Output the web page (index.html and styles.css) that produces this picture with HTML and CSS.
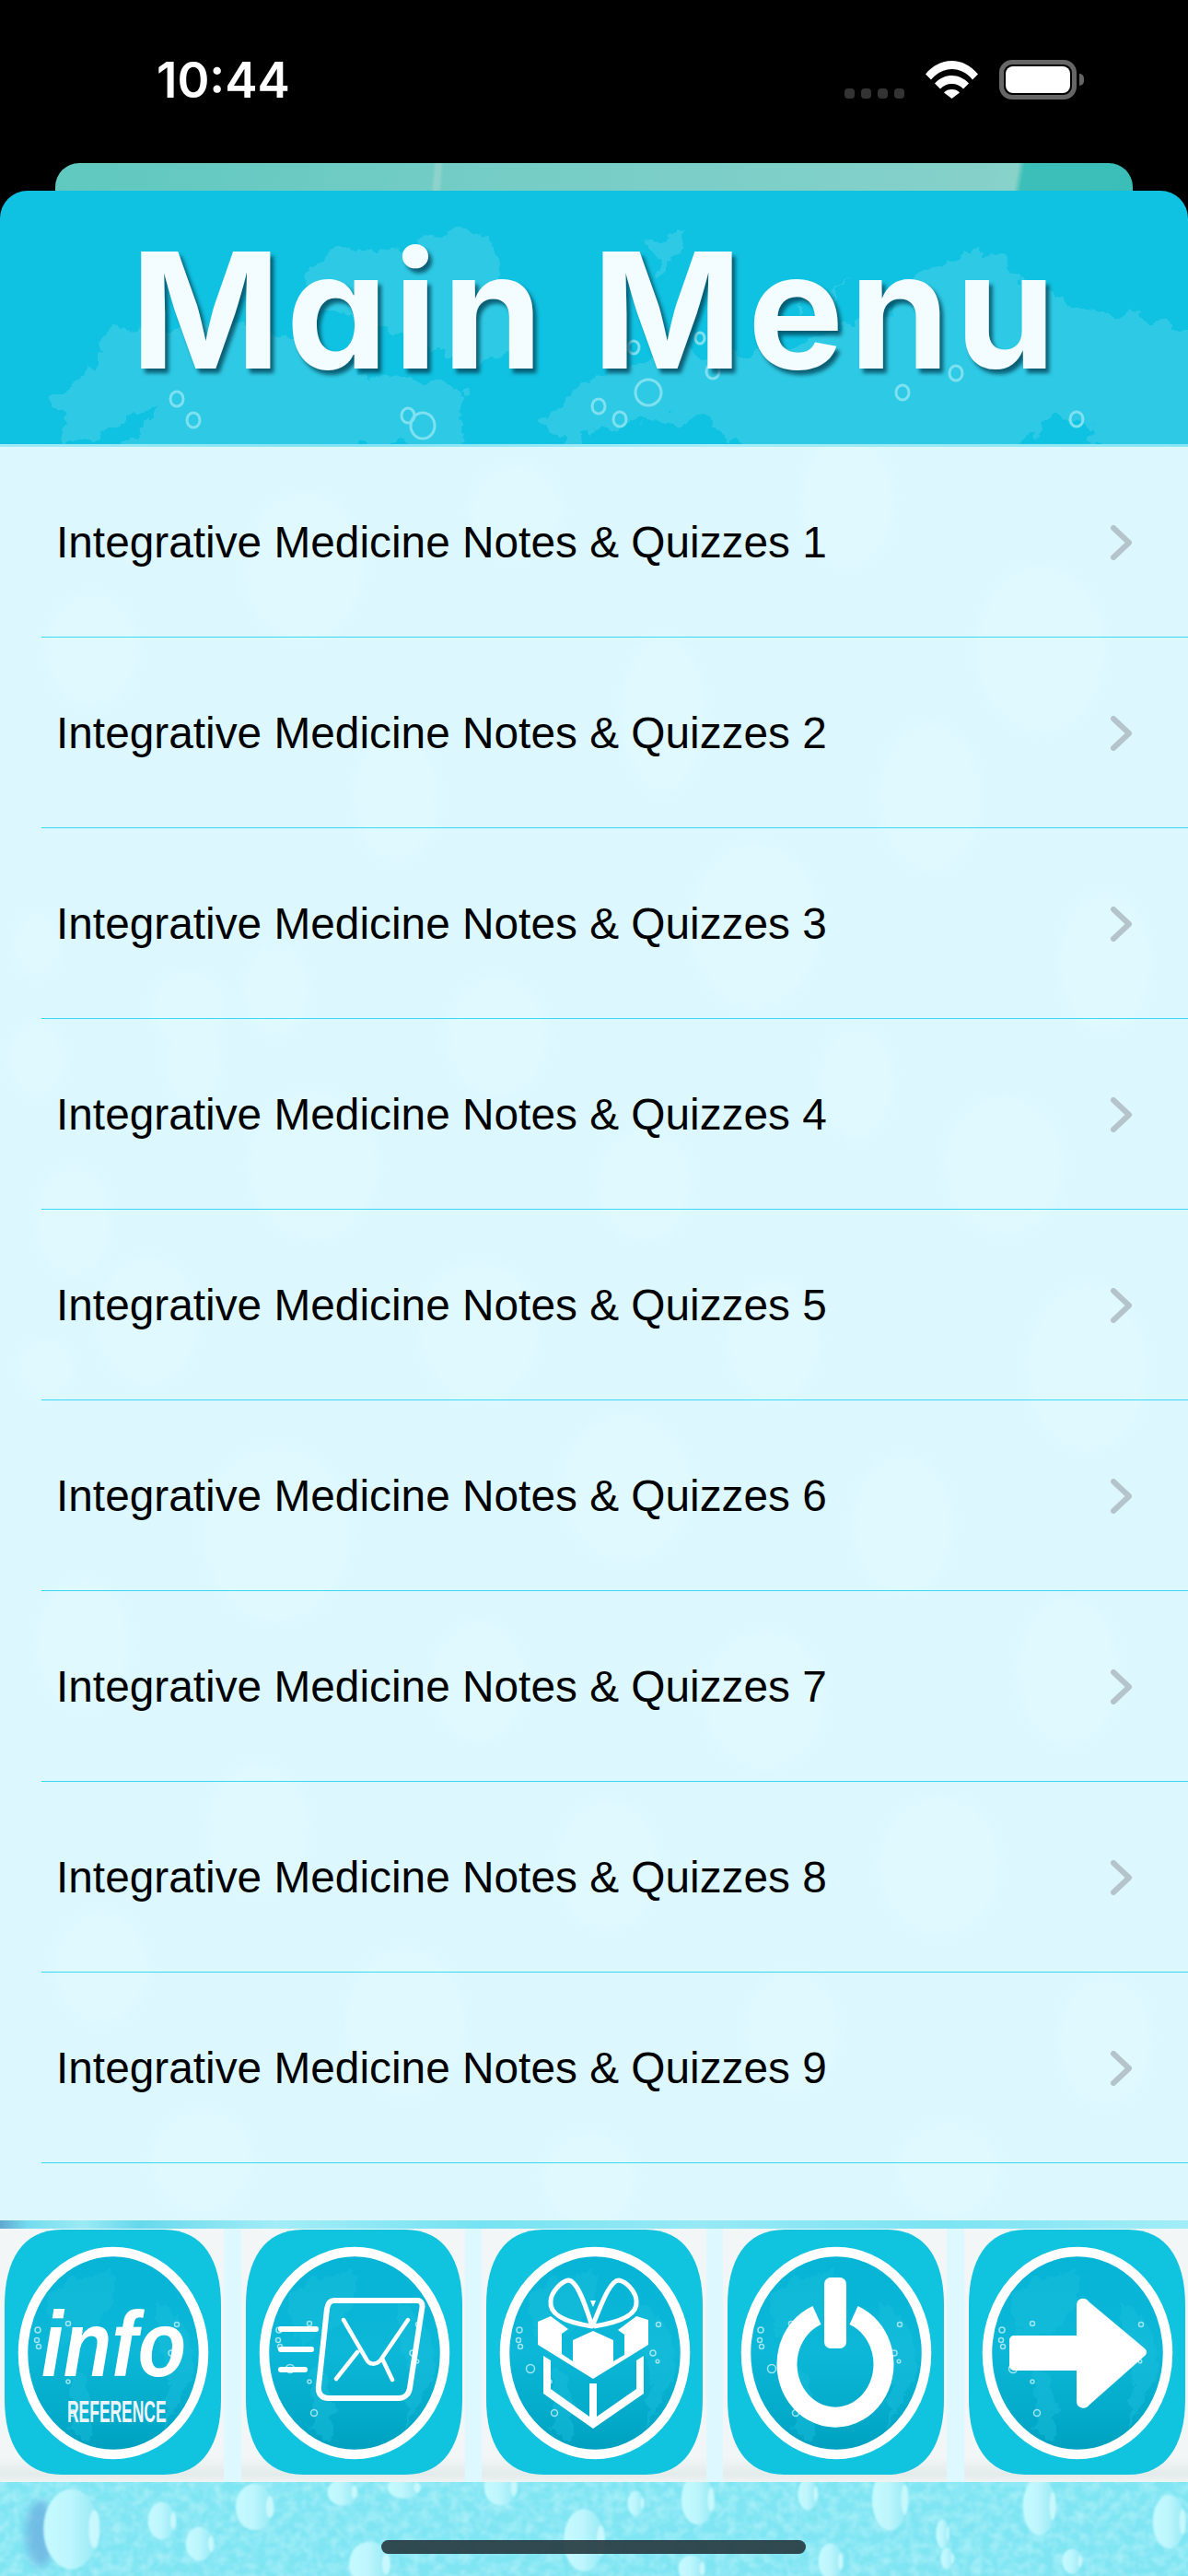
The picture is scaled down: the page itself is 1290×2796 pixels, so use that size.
FILE: index.html
```html
<!DOCTYPE html>
<html lang="en">
<head>
<meta charset="utf-8">
<title>Main Menu</title>
<link rel="stylesheet" href="styles.css">
</head>
<body>
<svg class="defs" width="0" height="0" aria-hidden="true">
  <defs>
    <linearGradient id="disc" x1="0" y1="0" x2="0" y2="1">
      <stop offset="0" stop-color="#06b4d6"/>
      <stop offset="0.5" stop-color="#0cb7d7"/>
      <stop offset="0.85" stop-color="#02a8c7"/>
      <stop offset="1" stop-color="#009fbe"/>
    </linearGradient>
    <linearGradient id="drop" x1="0" y1="0" x2="1" y2="0">
      <stop offset="0" stop-color="#c4faff"/>
      <stop offset="0.45" stop-color="#bff6fd"/>
      <stop offset="1" stop-color="#93e9f5"/>
    </linearGradient>
    <filter id="coast" x="-5%" y="-5%" width="110%" height="110%">
      <feTurbulence type="fractalNoise" baseFrequency="0.045" numOctaves="4" seed="7" result="n"/>
      <feDisplacementMap in="SourceGraphic" in2="n" scale="34" xChannelSelector="R" yChannelSelector="G"/>
    </filter>
    <filter id="coast-small" x="-5%" y="-5%" width="110%" height="110%">
      <feTurbulence type="fractalNoise" baseFrequency="0.09" numOctaves="3" seed="4" result="n"/>
      <feDisplacementMap in="SourceGraphic" in2="n" scale="16" xChannelSelector="R" yChannelSelector="G"/>
    </filter>
    <filter id="soft" x="-20%" y="-20%" width="140%" height="140%">
      <feGaussianBlur stdDeviation="4"/>
    </filter>
    <filter id="soft-drop" x="-20%" y="-20%" width="140%" height="140%">
      <feGaussianBlur stdDeviation="1.2"/>
    </filter>
    <filter id="grain" x="0" y="0" width="100%" height="100%">
      <feTurbulence type="fractalNoise" baseFrequency="0.09" numOctaves="2" seed="11"/>
      <feColorMatrix type="matrix" values="0 0 0 0 0.62  0 0 0 0 0.96  0 0 0 0 0.98  0.9 0 0 0 -0.32"/>
    </filter>
    <symbol id="drop-shape" viewBox="0 0 100 130" preserveAspectRatio="none">
      <ellipse class="drop" cx="46" cy="65" rx="44" ry="63"/>
      <ellipse class="drop-glint" cx="83" cy="65" rx="9" ry="30"/>
    </symbol>
    <symbol id="chev" viewBox="0 0 26 38">
      <path class="chev-line" d="M5 3 L22 19 L5 35"/>
    </symbol>
    <symbol id="base" viewBox="0 0 235 266">
      <path class="squircle" d="M62 0 H173 C216 0 235 34 235 82 V184 C235 232 216 266 173 266 H62 C19 266 0 232 0 184 V82 C0 34 19 0 62 0 Z"/>
      <ellipse class="disc" cx="118" cy="134" rx="98" ry="110"/>
      <path class="disc-map" d="M48 72 C70 50 92 50 118 44 C122 66 112 90 100 106 C86 112 72 116 62 128 C52 110 44 92 48 72 Z M72 150 C92 156 100 180 94 228 C84 226 76 222 70 216 C74 196 68 174 72 150 Z M166 80 C186 82 202 108 206 142 C200 172 188 196 174 214 C172 196 180 170 176 150 C168 128 160 106 166 80 Z"/>
      <g class="disc-dots">
        <circle cx="36" cy="109" r="3"/><circle cx="35" cy="120" r="2.500"/><circle cx="37" cy="127" r="2.500"/>
        <circle cx="69" cy="102" r="2.500"/><circle cx="187" cy="103" r="2.500"/><circle cx="69" cy="165" r="2"/>
        <circle cx="181" cy="134" r="3"/><circle cx="186" cy="143" r="1.800"/><circle cx="48" cy="151" r="4.500"/><circle cx="74" cy="199" r="3.500"/>
      </g>
      <ellipse class="ring" cx="118" cy="134" rx="98" ry="110"/>
    </symbol>
  </defs>
</svg>

<main class="phone">
  <div class="status">
    <span class="time">10:44</span>
    <div class="status-icons">
      <div class="signal"><i></i><i></i><i></i><i></i></div>
      <svg class="wifi" viewBox="0 0 57 41">
        <path d="M0 14.500 C8 5 18 0 28.500 0 C39 0 49 5 57 14.500 L51 20.500 C45 13 37 9 28.500 9 C20 9 12 13 6 20.500 Z"/>
        <path d="M10 24.500 C15 19 21.500 16 28.500 16 C35.500 16 42 19 47 24.500 L41 30.500 C38 27 33.500 25 28.500 25 C23.500 25 19 27 16 30.500 Z"/>
        <path d="M20 34.500 C22 32 25 31 28.500 31 C32 31 35 32 37 34.500 L28.500 41 Z"/>
      </svg>
      <div class="battery"><div class="battery-level"></div></div>
      <div class="battery-nub"></div>
    </div>
  </div>

  <div class="back-card"></div>

  <header class="header">
    <svg class="map" viewBox="0 0 1290 275" preserveAspectRatio="none" aria-hidden="true">
      <g class="lands">
        <path d="M335 85 L375 60 L440 65 L495 40 L535 55 L550 95 L575 135 L555 170 L515 190 L470 175 L420 150 L360 130 L325 110 Z"/>
        <path d="M55 225 L85 210 L125 148 L190 155 L260 145 L330 165 L390 200 L450 205 L490 215 L510 220 L490 290 L400 275 L370 290 L130 290 L175 230 L150 240 L100 270 L60 290 L75 250 Z"/>
        <path d="M705 50 L750 45 L735 75 L715 90 Z"/>
        <path d="M880 118 L925 95 L885 122 L868 135 Z"/>
        <path d="M1005 80 L1060 65 L1095 75 L1110 105 L1190 130 L1300 150 L1300 290 L1220 290 L1180 262 L1150 245 L1090 290 L860 290 L800 270 L760 245 L650 255 L620 290 L595 245 L625 215 L660 195 L720 180 L830 175 L885 160 L960 135 Z"/>
      </g>
      <g class="bubbles">
        <ellipse cx="192" cy="226" rx="7" ry="8"/><ellipse cx="210" cy="249" rx="7" ry="8"/>
        <ellipse cx="443" cy="244" rx="7" ry="8"/><ellipse cx="459" cy="255" rx="13" ry="14"/>
        <ellipse cx="650" cy="234" rx="7" ry="8"/><ellipse cx="704" cy="219" rx="14" ry="14"/>
        <ellipse cx="673" cy="248" rx="7" ry="8"/><ellipse cx="980" cy="219" rx="7" ry="8"/>
        <ellipse cx="1169" cy="248" rx="7" ry="8"/><ellipse cx="1038" cy="198" rx="7" ry="8"/>
        <ellipse cx="774" cy="196" rx="7" ry="8"/><ellipse cx="688" cy="170" rx="6" ry="7"/><ellipse cx="760" cy="160" rx="5" ry="6"/>
      </g>
    </svg>
    <h1 class="title">Main Menu</h1>
  </header>
  <div class="header-edge"></div>

  <section class="list">
    <svg class="list-bg" viewBox="0 0 1290 1925" preserveAspectRatio="none" aria-hidden="true">
      <g class="list-drops">
        <ellipse cx="330" cy="130" rx="65" ry="80"/><ellipse cx="920" cy="60" rx="50" ry="70"/>
        <ellipse cx="1130" cy="220" rx="70" ry="90"/><ellipse cx="560" cy="70" rx="50" ry="50"/>
        <ellipse cx="100" cy="220" rx="50" ry="60"/><ellipse cx="720" cy="290" rx="45" ry="85"/>
        <ellipse cx="430" cy="380" rx="45" ry="70"/><ellipse cx="1010" cy="380" rx="55" ry="80"/>
        <ellipse cx="40" cy="540" rx="25" ry="35"/><ellipse cx="205" cy="610" rx="40" ry="40"/>
        <ellipse cx="300" cy="590" rx="35" ry="50"/><ellipse cx="40" cy="665" rx="30" ry="40"/>
        <ellipse cx="210" cy="665" rx="30" ry="50"/><ellipse cx="50" cy="1000" rx="30" ry="30"/>
        <ellipse cx="820" cy="520" rx="70" ry="90"/><ellipse cx="1200" cy="560" rx="50" ry="75"/>
        <ellipse cx="540" cy="640" rx="55" ry="65"/><ellipse cx="80" cy="840" rx="40" ry="60"/>
        <ellipse cx="340" cy="780" rx="70" ry="80"/><ellipse cx="700" cy="800" rx="50" ry="60"/>
        <ellipse cx="1090" cy="780" rx="65" ry="75"/><ellipse cx="930" cy="690" rx="40" ry="60"/>
        <ellipse cx="160" cy="950" rx="55" ry="70"/><ellipse cx="520" cy="960" rx="65" ry="75"/>
        <ellipse cx="840" cy="970" rx="50" ry="65"/><ellipse cx="1180" cy="1000" rx="65" ry="90"/>
        <ellipse cx="680" cy="1130" rx="70" ry="80"/><ellipse cx="300" cy="1180" rx="80" ry="95"/>
        <ellipse cx="980" cy="1170" rx="55" ry="75"/><ellipse cx="90" cy="1300" rx="50" ry="70"/>
        <ellipse cx="520" cy="1340" rx="50" ry="65"/><ellipse cx="830" cy="1360" rx="65" ry="75"/>
        <ellipse cx="1160" cy="1330" rx="55" ry="80"/><ellipse cx="280" cy="1500" rx="55" ry="70"/>
        <ellipse cx="660" cy="1540" rx="55" ry="70"/><ellipse cx="1020" cy="1540" rx="65" ry="75"/>
        <ellipse cx="110" cy="1650" rx="50" ry="60"/><ellipse cx="440" cy="1710" rx="65" ry="80"/>
        <ellipse cx="860" cy="1720" rx="50" ry="65"/><ellipse cx="1200" cy="1730" rx="50" ry="70"/>
        <ellipse cx="220" cy="1860" rx="55" ry="55"/><ellipse cx="640" cy="1880" rx="50" ry="50"/>
        <ellipse cx="1030" cy="1870" rx="55" ry="50"/>
      </g>
    </svg>
    <a class="row"><span class="row-text">Integrative Medicine Notes &amp; Quizzes 1</span><svg class="chevron"><use href="#chev"/></svg></a>
    <a class="row"><span class="row-text">Integrative Medicine Notes &amp; Quizzes 2</span><svg class="chevron"><use href="#chev"/></svg></a>
    <a class="row"><span class="row-text">Integrative Medicine Notes &amp; Quizzes 3</span><svg class="chevron"><use href="#chev"/></svg></a>
    <a class="row"><span class="row-text">Integrative Medicine Notes &amp; Quizzes 4</span><svg class="chevron"><use href="#chev"/></svg></a>
    <a class="row"><span class="row-text">Integrative Medicine Notes &amp; Quizzes 5</span><svg class="chevron"><use href="#chev"/></svg></a>
    <a class="row"><span class="row-text">Integrative Medicine Notes &amp; Quizzes 6</span><svg class="chevron"><use href="#chev"/></svg></a>
    <a class="row"><span class="row-text">Integrative Medicine Notes &amp; Quizzes 7</span><svg class="chevron"><use href="#chev"/></svg></a>
    <a class="row"><span class="row-text">Integrative Medicine Notes &amp; Quizzes 8</span><svg class="chevron"><use href="#chev"/></svg></a>
    <a class="row"><span class="row-text">Integrative Medicine Notes &amp; Quizzes 9</span><svg class="chevron"><use href="#chev"/></svg></a>
  </section>

  <div class="toolbar-edge"></div>

  <nav class="toolbar">
    <div class="tile">
      <svg class="tool" viewBox="0 0 235 266">
        <use href="#base"/>
        <text class="info-word" transform="translate(40 159) scale(0.857 1)">info</text>
        <text class="info-sub" transform="translate(68 209) scale(0.513 1)">REFERENCE</text>
      </svg>
    </div>
    <div class="tile">
      <svg class="tool" viewBox="0 0 235 266">
        <use href="#base"/>
        <path class="glyph-line" d="M96 77 H186 C192 77 192 83 191 87 L178 172 C177 179 172 183 166 183 H90 C82 183 78 178 79 170 L88 86 C89 80 91 77 96 77 Z"/>
        <path class="glyph-thin" d="M106 98 L131 141 C134 147 141 147 146 142 L176 98 M121 133 L98 162 M148 140 L159 163"/>
        <path class="glyph-thick" d="M38 108 H76 M38 130 H71 M38 152 H64"/>
      </svg>
    </div>
    <div class="tile">
      <svg class="tool" viewBox="0 0 235 266">
        <use href="#base"/>
        <path class="glyph-solid" d="M70 94 L56 100 V125 L116 162 L176 125 V98 L163 94 L143 109 L150 114 V136 L138 143 V120 L116 110 L94 120 V143 L82 135 V113 L89 108 Z"/>
        <path class="glyph-bow" d="M115 105 C95 102 68 95 70 78 C70 68 82 56 89 55 C100 55 110 90 115 105 C122 90 133 55 144 55 C152 56 163 68 163 78 C165 95 136 102 117 105"/>
        <path class="glyph-solid" d="M113 77 H119 L116 84 Z"/>
        <path class="glyph-solid" d="M62 137 L70 142 V173 L112 203 V167 H120 V203 L163 173 V142 L171 137 V178 L116 216 L62 178 Z"/>
      </svg>
    </div>
    <div class="tile">
      <svg class="tool" viewBox="0 0 235 266">
        <use href="#base"/>
        <path class="glyph-power" d="M97 93 A52.500 57.500 0 1 0 137 93"/>
        <rect class="glyph-solid" x="105" y="52" width="24" height="77" rx="7"/>
      </svg>
    </div>
    <div class="tile">
      <svg class="tool" viewBox="0 0 235 266">
        <use href="#base"/>
        <path class="glyph-arrow" d="M49 120 H122 V82 C122 79 125 79 127 82 L188 133 L127 187 C125 190 122 189 122 186 V148 H49 Z"/>
      </svg>
    </div>
  </nav>

  <div class="floor">
    <svg class="floor-drops" viewBox="0 0 1290 102" aria-hidden="true">
      <rect class="floor-grain" width="1290" height="102"/>
      <g class="floor-group" transform="translate(0 -2694)">
        <ellipse class="drop-shade" cx="44" cy="2750" rx="16" ry="36"/>
        <use href="#drop-shape" x="46" y="2700" width="68" height="90"/>
        <use href="#drop-shape" x="160" y="2715" width="34" height="42"/>
        <use href="#drop-shape" x="201" y="2742" width="34" height="38"/>
        <use href="#drop-shape" x="255" y="2695" width="46" height="52"/>
        <use href="#drop-shape" x="355" y="2690" width="36" height="30"/>
        <use href="#drop-shape" x="378" y="2758" width="50" height="50"/>
        <use href="#drop-shape" x="420" y="2688" width="40" height="24"/>
        <use href="#drop-shape" x="525" y="2680" width="40" height="40"/>
        <use href="#drop-shape" x="611" y="2722" width="50" height="70"/>
        <use href="#drop-shape" x="681" y="2703" width="20" height="28"/>
        <use href="#drop-shape" x="739" y="2685" width="40" height="56"/>
        <use href="#drop-shape" x="736" y="2773" width="32" height="30"/>
        <use href="#drop-shape" x="866" y="2689" width="24" height="36"/>
        <use href="#drop-shape" x="888" y="2760" width="30" height="40"/>
        <use href="#drop-shape" x="946" y="2678" width="44" height="70"/>
        <use href="#drop-shape" x="1016" y="2734" width="16" height="32"/>
        <use href="#drop-shape" x="1021" y="2765" width="16" height="24"/>
        <use href="#drop-shape" x="1110" y="2687" width="40" height="66"/>
        <use href="#drop-shape" x="1153" y="2766" width="24" height="28"/>
        <use href="#drop-shape" x="1251" y="2707" width="40" height="60"/>
      </g>
    </svg>
    <div class="home-bar"></div>
  </div>
</main>
</body>
</html>
```
FILE: styles.css
```css
* { box-sizing: border-box; }
html, body { margin: 0; padding: 0; background: #000; }

.defs { display: block; position: absolute; }

.phone {
  width: 1290px;
  height: 2796px;
  display: flex;
  flex-direction: column;
  overflow: hidden;
  background: #000;
}

/* status bar */
.status {
  height: 177px;
  flex: none;
  display: flex;
  align-items: flex-start;
  justify-content: space-between;
  padding: 58px 113px 0 170px;
}
.time {
  font: 600 53px/1 Inter, "Liberation Sans", sans-serif;
  color: #fff;
  margin-top: 3px;
}
.status-icons {
  display: flex;
  align-items: flex-start;
  padding-top: 7px;
}
.signal {
  display: flex;
  gap: 7px;
  margin-top: 31px;
  margin-right: 23px;
}
.signal i {
  width: 11px;
  height: 11px;
  border-radius: 4px;
  background: #333;
}
.wifi { width: 57px; height: 41px; margin-top: 1px; margin-right: 23px; fill: #fff; }
.battery {
  width: 84px;
  height: 43px;
  border: 5px solid #666;
  border-radius: 14px;
  padding: 2px;
}
.battery-level { height: 100%; border-radius: 8px; background: #fff; }
.battery-nub {
  width: 5px;
  height: 13px;
  margin: 15px 0 0 3px;
  border-radius: 0 6px 6px 0;
  background: #666;
}

/* stacked card behind the header */
.back-card {
  height: 30px;
  flex: none;
  margin: 0 60px;
  border-radius: 26px 26px 0 0;
  background:
    linear-gradient(95deg, transparent 35%, #8ed2cc 35.3%, #8ed2cc 35.7%, transparent 36%),
    linear-gradient(100deg, #5fc8bf 0%, #74cdc6 40%, #85d1ca 86%, #88d2ca 89%, #3dbfb9 89.6%, #3bbeb8 100%);
}

/* header */
.header {
  position: relative;
  height: 275px;
  flex: none;
  display: flex;
  justify-content: center;
  border-radius: 30px 30px 0 0;
  background: #10c2e2;
  overflow: hidden;
}
.map { position: absolute; inset: 0; width: 100%; height: 100%; }
.lands { fill: #2ecae5; filter: url(#coast); }
.bubbles { fill: none; stroke: #7fe0f0; stroke-width: 3; }
.title {
  position: relative;
  margin: 24px 0 0 4px;
  font: 700 175px/1.2 Inter, "Liberation Sans", sans-serif;
  font-feature-settings: "cv11" 1;
  letter-spacing: 6px;
  color: #f3fcfe;
  text-shadow: 4px 5px 4px rgba(0, 60, 80, 0.75);
  white-space: nowrap;
}
.header-edge {
  height: 3px;
  flex: none;
  background: linear-gradient(90deg, #9eeaf6, #7fe3f3 30%, #a5edf7 60%, #86e5f4 100%);
}

/* list */
.list {
  position: relative;
  height: 1925px;
  flex: none;
  overflow: hidden;
  background: #dcf8fe;
}
.list-bg { position: absolute; inset: 0; width: 100%; height: 100%; }
.list-drops { fill: #e2fbff; opacity: 0.55; filter: url(#soft); }
.row {
  position: relative;
  height: 207px;
  margin-left: 45px;
  padding: 1px 60px 0 16px;
  display: flex;
  align-items: center;
  justify-content: space-between;
  border-bottom: 1px solid #3ad8f8;
}
.row-text {
  font: 400 47.8px/1 "Liberation Sans", Arial, sans-serif;
  color: #000;
  white-space: nowrap;
}
.chevron { width: 26px; height: 38px; flex: none; }
.chev-line {
  fill: none;
  stroke: #b4c4ca;
  stroke-width: 6;
  stroke-linecap: round;
  stroke-linejoin: round;
}

/* toolbar */
.toolbar-edge {
  height: 9px;
  flex: none;
  background: linear-gradient(90deg, #5fa8d0 0, #74dcee 30px, #9aeaf5 90px, #66d8ec 150px, #a2edf7 300px, #76e2f2 520px, #96e9f5 760px, #7ce3f3 1020px, #a2edf7 1290px);
}
.toolbar {
  height: 275px;
  flex: none;
  display: flex;
  gap: 18.25px;
  background: #ddf8fe;
}
.tile {
  flex: 1;
  padding: 1px 0 0 1.5px;
  display: flex;
  justify-content: center;
  background: linear-gradient(#f2f6f6 0, #f2f6f6 90%, #e4ebeb 97%, #eef3f3 100%);
}
.tool { width: 235px; height: 266px; flex: none; }
.squircle { fill: #10c3de; }
.disc { fill: url(#disc); }
.disc-map { fill: #1cc0dd; opacity: 0.45; filter: url(#coast-small); }
.disc-dots { fill: none; stroke: #9fe6f2; stroke-width: 1.5; }
.ring { fill: none; stroke: #fff; stroke-width: 10.5; }
.info-word {
  font: italic 700 100px "Liberation Sans", Arial, sans-serif;
  fill: #fff;
}
.info-sub {
  font: 700 34px "Liberation Sans", Arial, sans-serif;
  fill: #eef4fb;
}
.glyph-line { fill: none; stroke: #fff; stroke-width: 6; stroke-linejoin: round; }
.glyph-thin { fill: none; stroke: #fff; stroke-width: 4.5; stroke-linecap: round; stroke-linejoin: round; }
.glyph-bow { fill: none; stroke: #fff; stroke-width: 5; stroke-linejoin: round; }
.glyph-thick { fill: none; stroke: #fff; stroke-width: 6; stroke-linecap: round; }
.glyph-solid { fill: #fff; }
.glyph-power { fill: none; stroke: #fff; stroke-width: 22; }
.glyph-arrow { fill: #fff; stroke: #fff; stroke-width: 10; stroke-linejoin: round; }

/* bottom area */
.floor {
  position: relative;
  flex: 1;
  background: #80e5f3;
}
.floor-drops { display: block; width: 100%; height: 100%; }
.floor-grain { filter: url(#grain); }
.floor-group { filter: url(#soft-drop); }
.drop { fill: url(#drop); }
.drop-glint { fill: #d8fcff; opacity: 0.75; }
.drop-shade { fill: #6aaee0; opacity: 0.75; filter: url(#soft); }
.home-bar {
  position: absolute;
  left: 414px;
  top: 63px;
  width: 461px;
  height: 15px;
  border-radius: 8px;
  background: rgba(40, 60, 66, 0.92);
}
```
